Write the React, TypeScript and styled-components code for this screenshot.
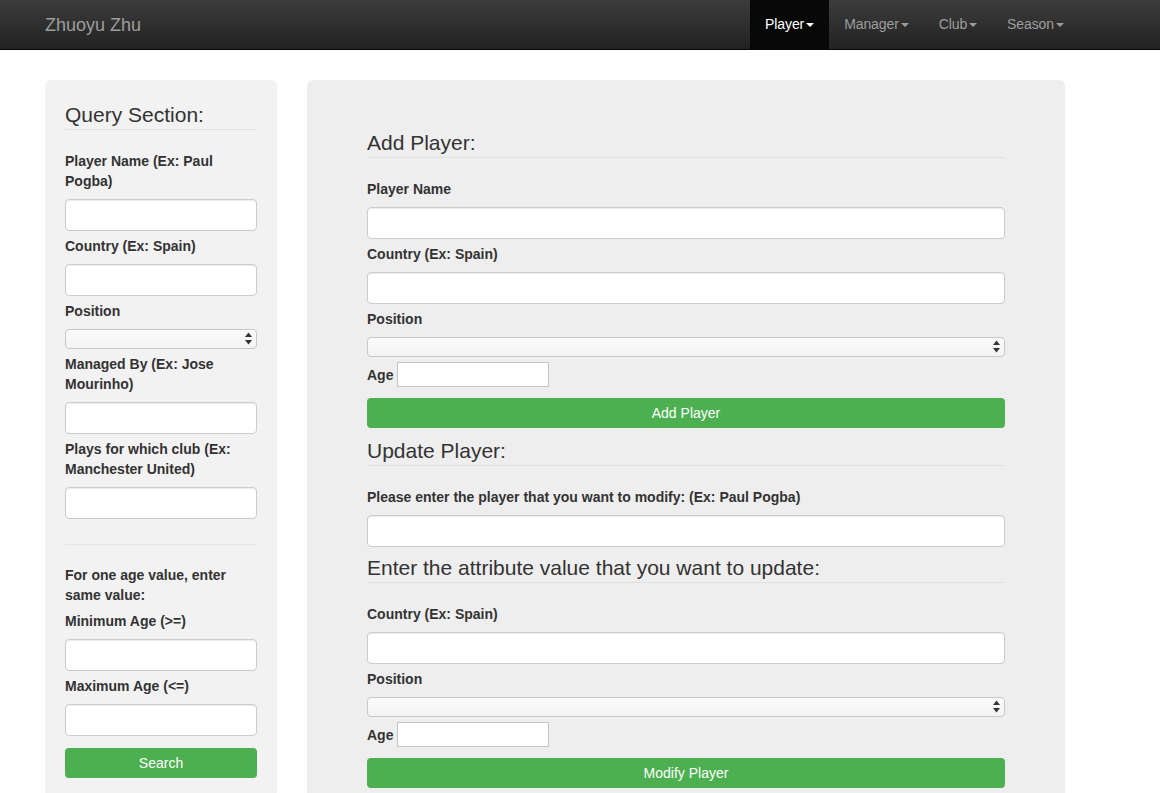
import React from "react";
import styled, { createGlobalStyle } from "styled-components";

const GlobalStyle = createGlobalStyle`
  html, body { margin: 0; padding: 0; background: #fff; }
  body {
    font-family: "Liberation Sans", Arial, Helvetica, sans-serif;
    font-size: 14px;
    line-height: 20px;
    color: #333;
  }
  * { box-sizing: border-box; }
`;

const Navbar = styled.header`
  height: 50px;
  border-bottom: 1px solid #080808;
  background: linear-gradient(to bottom, #3c3c3c 0%, #222 100%);
  display: flex;
  align-items: stretch;
  padding: 0 81px 0 45px;
`;

const Brand = styled.a`
  font-size: 18px;
  line-height: 20px;
  padding: 15px 0 14px;
  color: #9d9d9d;
  text-decoration: none;
`;

const Spacer = styled.div`
  flex: 1;
`;

const NavList = styled.ul`
  display: flex;
  list-style: none;
  margin: 0;
  padding: 0;
`;

const NavLink = styled.a<{ $active?: boolean }>`
  display: block;
  padding: 14px 15px 15px;
  line-height: 20px;
  font-size: 14px;
  letter-spacing: -0.1px;
  color: ${(p) => (p.$active ? "#fff" : "#9d9d9d")};
  background: ${(p) => (p.$active ? "#080808" : "transparent")};
  text-decoration: none;
`;

const Caret = styled.span`
  display: inline-block;
  width: 0;
  height: 0;
  margin-left: 2px;
  vertical-align: middle;
  border-top: 4px solid;
  border-left: 4px solid transparent;
  border-right: 4px solid transparent;
`;

const Main = styled.main`
  display: flex;
  align-items: flex-start;
  gap: 30px;
  padding: 30px 0 0 45px;
`;

const Well = styled.section<{ $width: number; $bg: string; $pad: string }>`
  width: ${(p) => p.$width}px;
  flex: none;
  background: ${(p) => p.$bg};
  border-radius: 6px;
  padding: ${(p) => p.$pad};
`;

const Heading = styled.h3<{ $mt?: number }>`
  font-size: 21px;
  line-height: 23px;
  font-weight: 400;
  margin: ${(p) => p.$mt ?? 0}px 0 21px;
  padding-bottom: 3px;
  border-bottom: 1px solid #e0e0e0;
  color: #333;
`;

const Group = styled.div`
  margin-bottom: 5px;
`;

const Label = styled.label`
  display: block;
  font-weight: bold;
  line-height: 20px;
  margin-bottom: 8px;
`;

const Note = styled.p`
  font-weight: bold;
  line-height: 20px;
  margin: 0 0 6px;
`;

const Input = styled.input`
  display: block;
  width: 100%;
  height: 32px;
  padding: 6px 12px;
  font: inherit;
  background: #fff;
  border: 1px solid #ccc;
  border-radius: 4px;
  box-shadow: inset 0 1px 1px rgba(0, 0, 0, 0.075);
`;

const SelectWrap = styled.div`
  position: relative;
  height: 20px;
`;

const Select = styled.select`
  display: block;
  width: 100%;
  height: 20px;
  appearance: none;
  -webkit-appearance: none;
  background: linear-gradient(to bottom, #fbfbfb, #f3f3f3);
  border: 1px solid #c8c8c8;
  border-radius: 4px;
  font: inherit;
  font-size: 12px;
  padding: 0 20px 0 6px;
`;

const Arrows = styled.svg`
  position: absolute;
  right: 5px;
  top: 3px;
  pointer-events: none;
`;

const Divider = styled.hr`
  border: 0;
  border-top: 1px solid #e6e6e6;
  margin: 25px 0 20px;
  height: 0;
`;

const AgeRow = styled.div`
  display: flex;
  align-items: center;
  margin-top: 5px;
`;

const AgeLabel = styled.label`
  font-weight: bold;
  margin-right: 4px;
`;

const AgeInput = styled.input`
  width: 152px;
  height: 25px;
  border: 1px solid #c6c6c6;
  border-radius: 0;
  background: #fff;
  padding: 2px 4px;
  font: inherit;
`;

const GreenButton = styled.button<{ $mt: number }>`
  display: block;
  width: 100%;
  height: 30px;
  margin-top: ${(p) => p.$mt}px;
  background: #4caf50;
  color: #fff;
  border: none;
  border-radius: 4px;
  font: inherit;
  font-size: 14px;
  line-height: 20px;
  padding: 0;
`;

const SelectArrows = () => (
  <Arrows width="7" height="13" viewBox="0 0 7 13">
    <path d="M0 5 L3.5 0.5 L7 5 Z" fill="#333" />
    <path d="M0 8 L3.5 12.5 L7 8 Z" fill="#333" />
  </Arrows>
);

const TextField = ({ label }: { label: string }) => (
  <Group>
    <Label>{label}</Label>
    <Input type="text" />
  </Group>
);

const SelectField = ({ label }: { label: string }) => (
  <Group>
    <Label>{label}</Label>
    <SelectWrap>
      <Select defaultValue="">
        <option value=""></option>
      </Select>
      <SelectArrows />
    </SelectWrap>
  </Group>
);

const AgeField = () => (
  <AgeRow>
    <AgeLabel>Age</AgeLabel>
    <AgeInput type="text" />
  </AgeRow>
);

const navItems = ["Player", "Manager", "Club", "Season"];

export default function App() {
  return (
    <>
      <GlobalStyle />
      <Navbar>
        <Brand href="#">Zhuoyu Zhu</Brand>
        <Spacer />
        <NavList>
          {navItems.map((n, i) => (
            <li key={n}>
              <NavLink href="#" $active={i === 0}>
                {n}
                <Caret />
              </NavLink>
            </li>
          ))}
        </NavList>
      </Navbar>
      <Main>
        <Well $width={232} $bg="#f2f2f2" $pad="23px 20px 20px">
          <Heading>Query Section:</Heading>
          <TextField label="Player Name (Ex: Paul Pogba)" />
          <TextField label="Country (Ex: Spain)" />
          <SelectField label="Position" />
          <TextField label="Managed By (Ex: Jose Mourinho)" />
          <TextField label="Plays for which club (Ex: Manchester United)" />
          <Divider />
          <Note>For one age value, enter same value:</Note>
          <TextField label="Minimum Age (>=)" />
          <TextField label="Maximum Age (<=)" />
          <GreenButton $mt={12}>Search</GreenButton>
        </Well>
        <Well $width={758} $bg="#eeeeee" $pad="51px 60px 20px">
          <Heading>Add Player:</Heading>
          <TextField label="Player Name" />
          <TextField label="Country (Ex: Spain)" />
          <SelectField label="Position" />
          <AgeField />
          <GreenButton $mt={11}>Add Player</GreenButton>
          <Heading $mt={11}>Update Player:</Heading>
          <TextField label="Please enter the player that you want to modify: (Ex: Paul Pogba)" />
          <Heading $mt={9}>Enter the attribute value that you want to update:</Heading>
          <TextField label="Country (Ex: Spain)" />
          <SelectField label="Position" />
          <AgeField />
          <GreenButton $mt={11}>Modify Player</GreenButton>
        </Well>
      </Main>
    </>
  );
}
